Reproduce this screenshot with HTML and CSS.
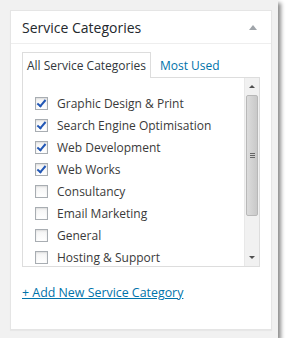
FILE: index.html
```html
<!DOCTYPE html>
<html lang="en">
<head>
  <meta charset="UTF-8">
  <title>Service Categories</title>
  <link rel="stylesheet" href="styles.css">
</head>
<body>
  <div class="frame">
    <div class="postbox">
      <!-- En-tête de la boîte -->
      <div class="box-header">
        <h2>Service Categories</h2>
        <span class="toggle-arrow"></span>
      </div>

      <div class="inside">
        <ul class="tabs">
          <li class="tab active">All Service Categories</li>
          <li class="tab"><a href="#">Most Used</a></li>
        </ul>

        <div class="tab-panel">
          <ul class="checklist">
            <li><span class="check checked"></span>Graphic Design &amp; Print</li>
            <li><span class="check checked"></span>Search Engine Optimisation</li>
            <li><span class="check checked"></span>Web Development</li>
            <li><span class="check checked"></span>Web Works</li>
            <li><span class="check"></span>Consultancy</li>
            <li><span class="check"></span>Email Marketing</li>
            <li><span class="check"></span>General</li>
            <li><span class="check"></span>Hosting &amp; Support</li>
          </ul>
          <!-- Barre de défilement dessinée -->
          <div class="scrollbar">
            <div class="scroll-btn up"></div>
            <div class="scroll-track">
              <div class="scroll-thumb"><span class="grip"></span></div>
            </div>
            <div class="scroll-btn down"></div>
          </div>
        </div>

        <p class="add-row"><a class="add-link" href="#">+ Add New Service Category</a></p>
      </div>
    </div>
  </div>
</body>
</html>
```

FILE: styles.css
```css
/* Fond blanc et cadre gris avec ombre portée */
body {
  margin: 0;
  background: #fff;
  font-family: "Open Sans", Arial, sans-serif;
}
.frame {
  width: 278px;
  height: 338px;
  box-sizing: border-box;
  padding: 10px 6px 8px 10px;
  background: #f1f1f1;
  box-shadow: 3px 3px 4px rgba(0, 0, 0, 0.45);
}
.postbox {
  height: 320px;
  box-sizing: border-box;
  background: #fff;
  border: 1px solid #e5e5e5;
  box-shadow: 0 1px 1px rgba(0, 0, 0, 0.04);
}
.box-header {
  display: flex;
  align-items: center;
  justify-content: space-between;
  height: 32px;
  padding: 0 11px;
  border-bottom: 1px solid #eee;
}
.box-header h2 {
  margin: 0;
  font-size: 14px;
  font-weight: 400;
  color: #23282d;
}
.toggle-arrow {
  width: 0;
  height: 0;
  border-left: 4px solid transparent;
  border-right: 4px solid transparent;
  border-bottom: 5px solid #a0a5aa;
  margin-right: 3px;
}
.inside {
  padding: 8px 11px 0;
}
/* Onglets */
.tabs {
  display: flex;
  list-style: none;
  margin: 0;
  padding: 0;
  font-size: 12px;
}
.tab {
  padding: 4px 4px 4px;
  line-height: 17px;
  border: 1px solid transparent;
  border-bottom: none;
  margin-bottom: -1px;
}
.tab.active {
  color: #32373c;
  border-color: #ddd;
  background: #fff;
  position: relative;
}
.tab a {
  color: #0073aa;
  text-decoration: none;
  padding-left: 4px;
}
.tab-panel {
  display: flex;
  height: 188px;
  border: 1px solid #ddd;
  overflow: hidden;
}
.checklist {
  flex: 1;
  list-style: none;
  margin: 0;
  padding: 14px 0 0 12px;
  font-size: 12px;
  color: #3a3a3a;
}
.checklist li {
  display: flex;
  align-items: center;
  height: 22px;
  white-space: nowrap;
}
/* Cases à cocher */
.check {
  position: relative;
  width: 11px;
  height: 11px;
  margin-right: 9px;
  border: 1px solid #a8adb2;
  background: linear-gradient(#f4f4f4, #fff);
  box-shadow: inset 0 1px 2px rgba(0, 0, 0, 0.1);
  flex-shrink: 0;
}
.check.checked::after {
  content: "";
  position: absolute;
  left: 3px;
  top: 0;
  width: 3px;
  height: 7px;
  border-right: 2px solid #2257b5;
  border-bottom: 2px solid #2257b5;
  transform: rotate(40deg);
}
/* Scrollbar */
.scrollbar {
  display: flex;
  flex-direction: column;
  width: 14px;
  background: #f1f1f1;
  border-left: 1px solid #e8e8e8;
}
.scroll-btn {
  height: 17px;
  display: flex;
  align-items: center;
  justify-content: center;
}
.scroll-btn.up::after {
  content: "";
  border-left: 3px solid transparent;
  border-right: 3px solid transparent;
  border-bottom: 3px solid #505050;
}
.scroll-btn.down::after {
  content: "";
  border-left: 3px solid transparent;
  border-right: 3px solid transparent;
  border-top: 3px solid #505050;
}
.scroll-track {
  flex: 1;
  padding: 0 1px;
}
.scroll-thumb {
  height: 121px;
  display: flex;
  align-items: center;
  justify-content: center;
  background: linear-gradient(to right, #dcdcdc, #c9c9c9);
  border: 1px solid #b8b8b8;
  border-radius: 2px;
  box-sizing: border-box;
}
.grip {
  width: 5px;
  height: 5px;
  border-top: 1px solid #666;
  border-bottom: 1px solid #666;
  box-sizing: border-box;
  position: relative;
}
.grip::after {
  content: "";
  position: absolute;
  left: 0;
  right: 0;
  top: 1px;
  border-top: 1px solid #666;
}
.add-row {
  margin: 16px 0 0;
  line-height: 20px;
  font-size: 12.4px;
}
.add-link {
  color: #0073aa;
  text-decoration: underline;
}
```
